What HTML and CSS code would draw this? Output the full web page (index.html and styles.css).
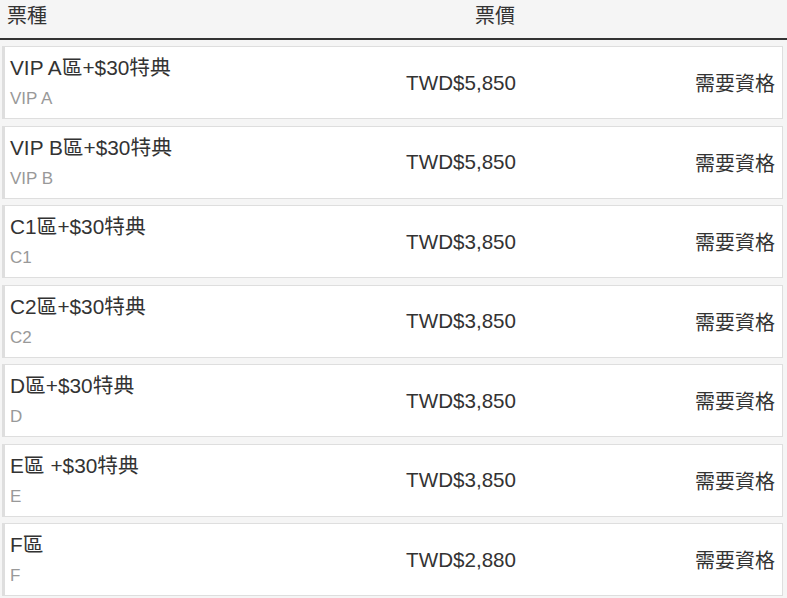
FILE: index.html
```html
<!DOCTYPE html>
<html lang="zh-Hant">
<head>
<meta charset="utf-8">
<link rel="stylesheet" href="styles.css">
</head>
<body>
<div class="table">
  <div class="head">
    <div class="h-name">票種</div>
    <div class="h-price">票價</div>
    <div class="h-status"></div>
  </div>
  <div class="rows">
    <div class="row"><div class="name"><div class="title">VIP A區+$30特典</div><div class="sub">VIP A</div></div><div class="price">TWD$5,850</div><div class="status">需要資格</div></div>
    <div class="row"><div class="name"><div class="title">VIP B區+$30特典</div><div class="sub">VIP B</div></div><div class="price">TWD$5,850</div><div class="status">需要資格</div></div>
    <div class="row"><div class="name"><div class="title">C1區+$30特典</div><div class="sub">C1</div></div><div class="price">TWD$3,850</div><div class="status">需要資格</div></div>
    <div class="row"><div class="name"><div class="title">C2區+$30特典</div><div class="sub">C2</div></div><div class="price">TWD$3,850</div><div class="status">需要資格</div></div>
    <div class="row"><div class="name"><div class="title">D區+$30特典</div><div class="sub">D</div></div><div class="price">TWD$3,850</div><div class="status">需要資格</div></div>
    <div class="row"><div class="name"><div class="title">E區 +$30特典</div><div class="sub">E</div></div><div class="price">TWD$3,850</div><div class="status">需要資格</div></div>
    <div class="row"><div class="name"><div class="title">F區</div><div class="sub">F</div></div><div class="price">TWD$2,880</div><div class="status">需要資格</div></div>
  </div>
</div>
</body>
</html>
```
FILE: styles.css
```css
html, body {
  margin: 0;
  padding: 0;
  background: #f5f5f5;
}
body {
  font-family: "Liberation Sans", "Noto Sans CJK TC", sans-serif;
  color: #333;
  overflow: hidden;
}
.table {
  width: 787px;
}
.head {
  display: grid;
  grid-template-columns: 1fr 120px 272px;
  height: 38px;
  border-bottom: 2px solid #333;
  font-size: 20px;
  line-height: 32px;
  color: #333;
}
.h-name {
  padding-left: 7px;
}
.h-price {
  text-align: right;
}
.rows {
  display: flex;
  flex-direction: column;
  gap: 6.5px;
  padding: 6px 4px 0 2px;
}
.row {
  display: grid;
  grid-template-columns: 1fr 130px 266px;
  align-items: center;
  height: 73px;
  box-sizing: border-box;
  background: #fff;
  border: 1px solid #dedede;
  border-left: 3px solid #dedede;
}
.name {
  padding-left: 5px;
}
.title {
  font-size: 20.8px;
  line-height: 24px;
  color: #333;
}
.sub {
  font-size: 17px;
  line-height: 20px;
  margin-top: 9px;
  color: #999;
}
.price {
  font-size: 20.6px;
  text-align: right;
  color: #333;
}
.status {
  font-size: 20px;
  text-align: right;
  padding-right: 7px;
  color: #333;
}
```
